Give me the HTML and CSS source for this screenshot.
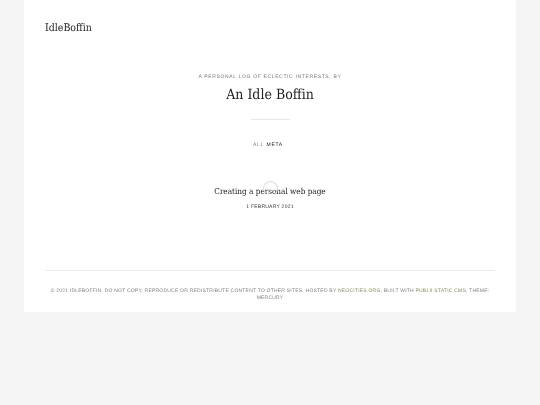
FILE: index.html
```html
<!DOCTYPE html>
<html lang="en">
<head>
<meta charset="utf-8">
<title>IdleBoffin</title>
<link rel="stylesheet" href="styles.css">
</head>
<body>
<div class="card">
  <div class="inner">
    <header class="brand"><a href="#">IdleBoffin</a></header>
    <section class="intro">
      <p class="tagline">A personal log of eclectic interests, by</p>
      <h1 class="author">An Idle Boffin</h1>
      <div class="rule"></div>
      <nav class="tags"><span>All</span><a href="#">Meta</a></nav>
    </section>
    <article class="post">
      <span class="spinner"></span>
      <h2 class="post-title">Creating a personal web page</h2>
      <p class="post-date">1 February 2021</p>
    </article>
    <footer class="foot">© 2021 IdleBoffin. Do not copy, reproduce or redistribute content to other sites. Hosted by <a href="#">Neocities.org</a>, built with <a href="#">Publii Static CMS</a>, theme: Mercury</footer>
  </div>
</div>
</body>
</html>
```
FILE: styles.css
```css
* { box-sizing: border-box; }
html, body { margin: 0; padding: 0; }
body { background: #f5f5f5; height: 405px; overflow: hidden; font-family: "Liberation Sans", Arial, sans-serif; text-rendering: geometricPrecision; }
a { color: inherit; text-decoration: none; }
.card { width: 492px; height: 312px; margin: 0 auto; background: #fff; }
.inner { height: 100%; padding: 0 21px; display: flex; flex-direction: column; will-change: transform; }
.brand { font-family: "DejaVu Serif Condensed", "DejaVu Serif", serif; font-size: 10.5px; line-height: 16px; color: #222; margin-top: 20px; }
.intro { margin-top: 38px; text-align: center; display: flex; flex-direction: column; align-items: center; }
.tagline { margin: 0; font-size: 5px; line-height: 7px; letter-spacing: .65px; text-transform: uppercase; color: #777; }
.author { margin: 4px 0 0; font-family: "DejaVu Serif Condensed", "DejaVu Serif", serif; font-weight: 400; font-size: 14px; line-height: 20px; color: #222; }
.rule { width: 39px; height: 1px; background: #e8e8e8; margin-top: 14px; }
.tags { margin-top: 22px; padding-right: 4px; display: flex; gap: 2.5px; font-size: 5px; line-height: 7px; letter-spacing: .7px; text-transform: uppercase; color: #777; }
.tags a { color: #222; }
.post { position: relative; margin-top: 35px; text-align: center; }
.post-title { margin: 0; font-family: "DejaVu Serif Condensed", "DejaVu Serif", serif; font-weight: 400; font-size: 8.15px; line-height: 14px; color: #222; }
.post-date { margin: 5.5px 0 0; font-size: 5px; line-height: 7px; letter-spacing: .25px; text-transform: uppercase; color: #333; }
.spinner { position: absolute; left: 50%; top: -3px; width: 15px; height: 15px; margin-left: -7.5px; border: 1px solid #ddd; border-bottom-color: transparent; border-radius: 50%; }
.foot { margin-top: auto; border-top: 1px solid #ececec; padding: 16.5px 0 9.5px; text-align: center; font-size: 5px; line-height: 7.5px; letter-spacing: .22px; text-transform: uppercase; color: #808080; }
.foot a { color: #8a8b60; }
```
